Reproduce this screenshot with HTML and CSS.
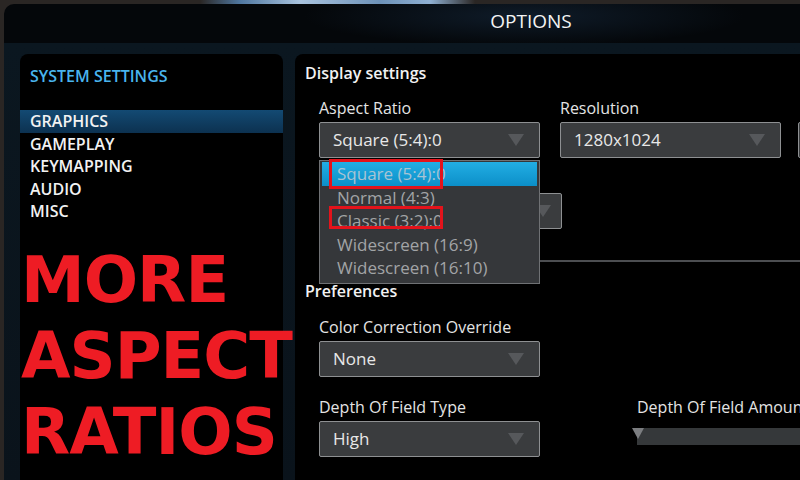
FILE: index.html
```html
<!DOCTYPE html>
<html lang="en">
<head>
    <meta charset="UTF-8">
    <meta name="viewport" content="width=device-width, initial-scale=1.0">
    <title>Options</title>
    <link rel="stylesheet" href="styles.css">
</head>
<body>
    <div class="window">
        <div class="titlebar">OPTIONS</div>
        <div class="frame">
            <aside class="sidebar">
                <h2 class="side-title">SYSTEM SETTINGS</h2>
                <ul class="nav">
                    <li class="active">GRAPHICS</li>
                    <li>GAMEPLAY</li>
                    <li>KEYMAPPING</li>
                    <li>AUDIO</li>
                    <li>MISC</li>
                </ul>
                <p class="promo">MORE<br>ASPECT<br>RATIOS</p>
            </aside>

            <main class="content">
                <h3 class="section">Display settings</h3>
                <div class="group">
                    <div class="row">
                        <div class="field">
                            <label>Aspect Ratio</label>
                            <div class="select">Square (5:4):0<span class="arrow"></span></div>
                            <!-- lista abierta -->
                            <ul class="dropdown">
                                <li class="active">Square (5:4):0</li>
                                <li>Normal (4:3)</li>
                                <li>Classic (3:2):0</li>
                                <li>Widescreen (16:9)</li>
                                <li>Widescreen (16:10)</li>
                                <span class="mark mark-1"></span>
                                <span class="mark mark-2"></span>
                            </ul>
                        </div>
                        <div class="field">
                            <label>Resolution</label>
                            <div class="select">1280x1024<span class="arrow"></span></div>
                        </div>
                        <div class="field field-last">
                            <label>&nbsp;</label>
                            <div class="select"></div>
                        </div>
                    </div>
                    <div class="row row-2">
                        <div class="field field-wide">
                            <label>&nbsp;</label>
                            <div class="select"><span class="arrow arrow-near"></span></div>
                        </div>
                    </div>
                    <div class="track"></div>
                </div>

                <h3 class="section section-prefs">Preferences</h3>
                <div class="group">
                    <div class="field">
                        <label>Color Correction Override</label>
                        <div class="select">None<span class="arrow"></span></div>
                    </div>
                    <div class="row row-dof">
                        <div class="field">
                            <label>Depth Of Field Type</label>
                            <div class="select">High<span class="arrow"></span></div>
                        </div>
                        <div class="field field-amount">
                            <label>Depth Of Field Amount</label>
                            <div class="slider"><span class="thumb"></span></div>
                        </div>
                    </div>
                </div>
            </main>
        </div>
    </div>
</body>
</html>
```

FILE: styles.css
```css
*{
    margin: 0;
    padding: 0;
    box-sizing: border-box;
}
body{
    width: 800px;
    height: 480px;
    overflow: hidden;
    font-family: "Open Sans", "DejaVu Sans", sans-serif;
    background-color: #2a2624;
    background-image: linear-gradient(to right, transparent 200px, #4f77a0 240px, #a9c3de 300px, #6d92b8 380px, #8fb0d2 430px, transparent 475px);
    background-size: 100% 5px;
    background-repeat: no-repeat;
}
.window{
    width: 1060px;
    margin: 4px 0 0 4px;
    background: #04070a;
    border-radius: 10px 0 0 0;
}
.titlebar{
    height: 39px;
    line-height: 35px;
    padding-right: 6px;
    text-align: center;
    font-size: 19px;
    color: #f4f4f4;
    background: radial-gradient(ellipse 220px 30px at 520px 12px, rgba(28, 52, 78, 0.45), transparent);
}
.frame{
    display: flex;
    gap: 12px;
    height: 440px;
    padding: 11px 0 0 16px;
    background: linear-gradient(#0b1720, #0a131b);
}

/* panel izquierdo */
.sidebar{
    width: 263px;
    background: #000;
    border-radius: 8px 8px 0 0;
    padding-top: 11px;
    position: relative;
    z-index: 1;
}
.side-title{
    padding-left: 10px;
    font-size: 16px;
    font-weight: 600;
    line-height: 22px;
    color: #49b4ee;
}
.nav{
    list-style: none;
    margin-top: 23px;
}
.nav li{
    padding-left: 10px;
    height: 22.5px;
    line-height: 22.5px;
    font-size: 16px;
    font-weight: 600;
    color: #f2f2f2;
}
.nav li.active{
    background: linear-gradient(#134a73, #0c3150);
}
.promo{
    margin-top: 19px;
    padding-left: 1px;
    font-family: "DejaVu Sans", sans-serif;
    font-weight: bold;
    font-size: 64px;
    line-height: 76px;
    letter-spacing: -1px;
    white-space: nowrap;
    color: #ee1c24;
}

/* panel derecho */
.content{
    flex: 1;
    background: #000;
    border-radius: 8px 0 0 0;
    padding: 8px 0 0 10px;
    overflow: hidden;
}
.section{
    font-size: 16px;
    font-weight: 600;
    line-height: 22px;
    color: #f2f2f2;
}
.section-prefs{
    margin-top: 18px;
}
.group{
    padding-left: 14px;
    margin-top: 13px;
}
.section-prefs + .group{
    margin-top: 14px;
}
.row{
    display: flex;
    gap: 20px;
    align-items: flex-start;
}
.row-2{
    margin-top: 10px;
}
.row-dof{
    margin-top: 19px;
}
.field{
    width: 221px;
    flex-shrink: 0;
    position: relative;
}
.field-last{
    margin-left: -3px;
}
.field-wide{
    width: 243px;
}
.field-amount{
    width: 300px;
    margin-left: 77px;
}
label{
    display: block;
    font-size: 16px;
    line-height: 22px;
    color: #e4e4e4;
    white-space: nowrap;
}
.select{
    position: relative;
    height: 36px;
    margin-top: 3px;
    padding-left: 13px;
    background: #3a3c3e;
    border: 1px solid #8e9092;
    border-radius: 2px;
    font-size: 17px;
    line-height: 34px;
    color: #e8e8e8;
}
.arrow{
    position: absolute;
    right: 15px;
    top: 11px;
    border-left: 8px solid transparent;
    border-right: 8px solid transparent;
    border-top: 12px solid #56585b;
}
.arrow-near{
    right: 10px;
}
.track{
    height: 2px;
    width: 700px;
    margin-top: 31px;
    background: #4c4e51;
}

/* lista desplegada */
.dropdown{
    position: absolute;
    top: 63px;
    left: 0;
    width: 221px;
    height: 124px;
    padding: 1px 2px;
    list-style: none;
    background: #35373a;
    border: 1px solid #6f7174;
    z-index: 2;
}
.dropdown li{
    height: 23.5px;
    line-height: 23.5px;
    padding-left: 15px;
    font-size: 17px;
    color: #a2a4a6;
    white-space: nowrap;
}
.dropdown li.active{
    background: linear-gradient(#22aee4, #0c8fc8);
    color: #a8c4d4;
}
.mark{
    position: absolute;
    left: 9px;
    width: 114px;
    border: 3px solid #e3131b;
}
.mark-1{
    top: -2px;
    height: 30px;
}
.mark-2{
    top: 45px;
    height: 23px;
}

/* barra */
.slider{
    position: relative;
    height: 17px;
    margin-top: 10px;
    background: #35383a;
}
.thumb{
    position: absolute;
    left: -5px;
    top: 0;
    border-left: 6px solid transparent;
    border-right: 6px solid transparent;
    border-top: 11px solid #7b7d80;
}
```
